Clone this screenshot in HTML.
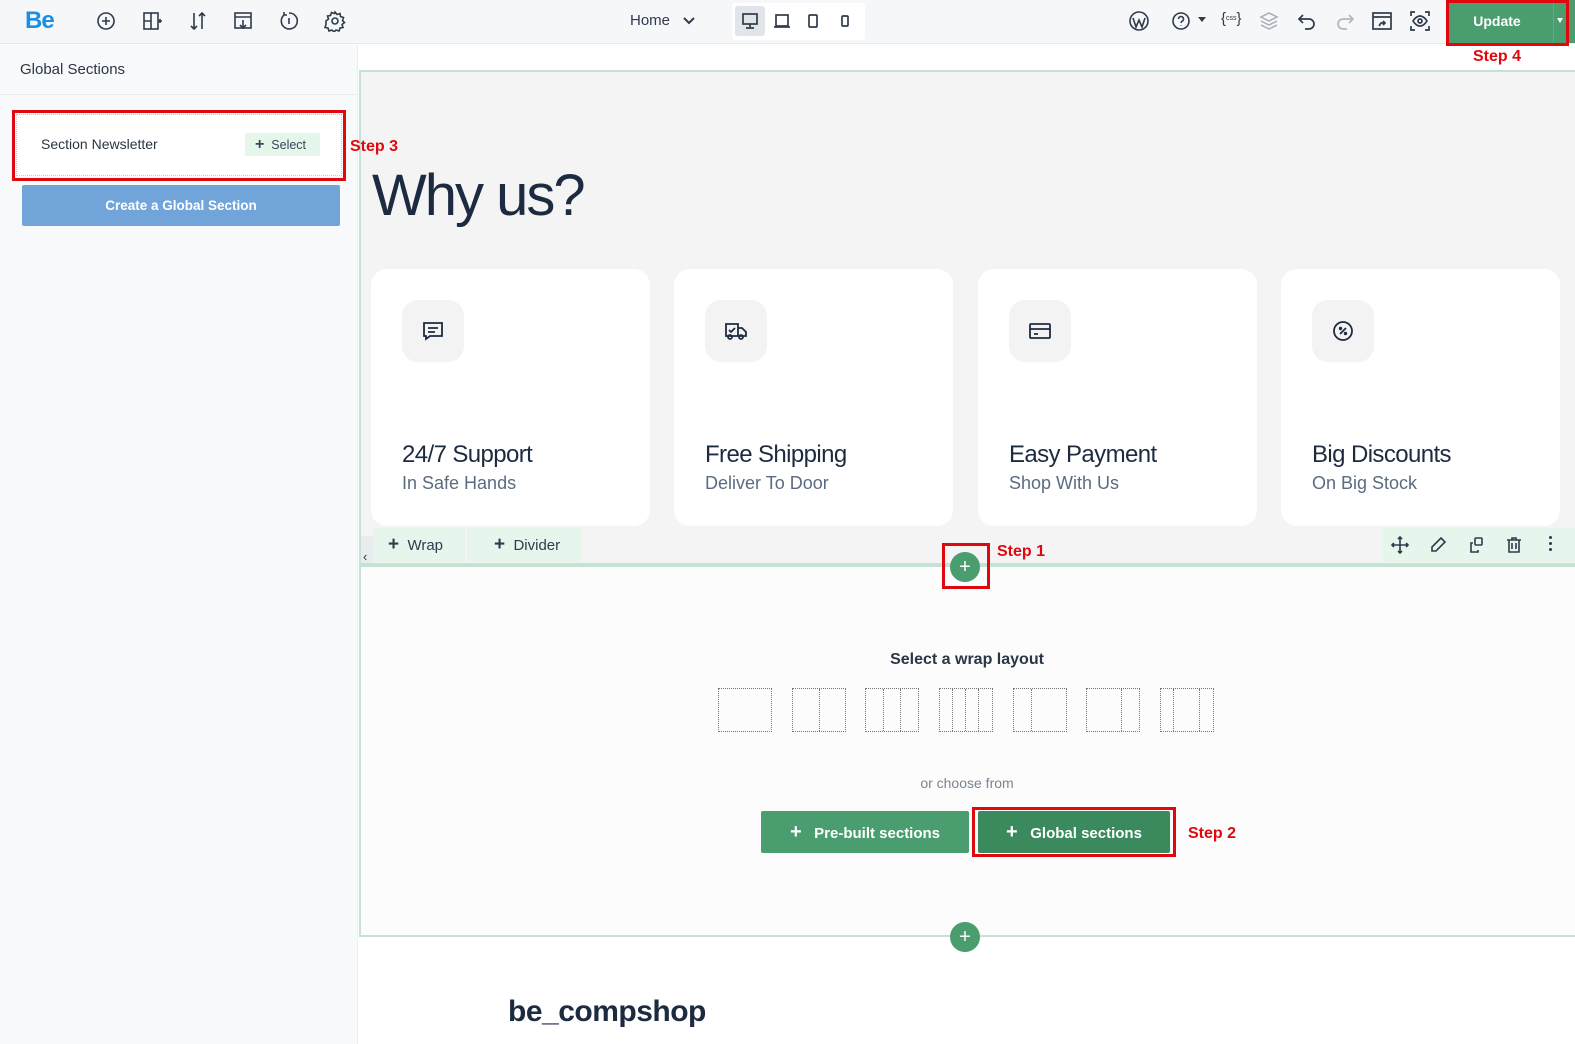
<!DOCTYPE html>
<html><head><meta charset="utf-8"><style>
*{box-sizing:border-box;margin:0;padding:0}
body{width:1575px;height:1044px;overflow:hidden;background:#fff;font-family:"Liberation Sans",sans-serif;position:relative;color:#1d2b40}
.a{position:absolute}
.ic{position:absolute;top:10px;width:22px;height:22px}
.red{position:absolute;border:3px solid #e0080f;z-index:5}
.stp{position:absolute;color:#e0080f;font-weight:bold;font-size:16px;z-index:5}
.card{position:absolute;top:269px;width:279px;height:257px;background:#fff;border-radius:16px}
.card .ib{position:absolute;left:31px;top:31px;width:62px;height:62px;border-radius:16px;background:#f3f3f3}
.card .ib svg{position:absolute;left:19px;top:19px}
.card h3{position:absolute;left:31px;top:172px;font-size:24px;font-weight:normal;color:#1d2b40;letter-spacing:-0.6px}
.card p{position:absolute;left:31px;top:204px;font-size:18px;color:#5b6b80}
.lay{position:absolute;top:688px;width:54px;height:44px;border:1.5px dotted #777}
.lay i{position:absolute;top:0;bottom:0;border-left:1.5px dotted #777}
.btn{position:absolute;top:811px;height:42px;color:#fff;font-size:15px;font-weight:bold;line-height:42px;text-align:center;border-radius:2px}
</style></head><body>
<!-- top bar -->
<div class="a" style="left:0;top:0;width:1575px;height:44px;background:#f6f7f9;border-bottom:1px solid #e6e9ee"></div>
<div class="a" style="left:25px;top:7px;font-size:24px;font-weight:bold;color:#1a8fe8;letter-spacing:-1px">Be</div>
<svg class="ic" style="left:95px" viewBox="0 0 22 22" fill="none" stroke="#2f3b4c" stroke-width="1.6"><circle cx="11" cy="11" r="8"/><path d="M11 7v8M7 11h8"/></svg>
<svg class="ic" style="left:141px" viewBox="0 0 22 22" fill="none" stroke="#2f3b4c" stroke-width="1.6"><rect x="3" y="3" width="14" height="16"/><path d="M10 3v16M3 11h7M17 11h4M19 9v4"/></svg>
<svg class="ic" style="left:187px" viewBox="0 0 22 22" fill="none" stroke="#2f3b4c" stroke-width="1.6"><path d="M7 3v16M4 16l3 3 3-3M15 19V3M12 6l3-3 3 3"/></svg>
<svg class="ic" style="left:232px" viewBox="0 0 22 22" fill="none" stroke="#2f3b4c" stroke-width="1.6"><rect x="3" y="3" width="16" height="15"/><path d="M3 7h16M11 10v8M8 15l3 3 3-3"/></svg>
<svg class="ic" style="left:278px" viewBox="0 0 22 22" fill="none" stroke="#2f3b4c" stroke-width="1.6"><path d="M6 5a8 8 0 1 0 5-2M6 2v3h3M11 8v6"/></svg>
<svg class="ic" style="left:324px" viewBox="0 0 22 22" fill="none" stroke="#2f3b4c" stroke-width="1.6"><circle cx="11" cy="11" r="3"/><path d="M11 2l2 2.5 3-1 .5 3 3 1-1 3 2 2-2.5 2 1 3-3 .5-1 3-3-1-2 2-2-2-3 1-1-3-3-.5 1-3L2 11l2.5-2-1-3 3-.5 1-3 3 1z"/></svg>
<div class="a" style="left:630px;top:12px;font-size:15px;color:#2f3b4c">Home</div>
<svg class="a" style="left:682px;top:14px" width="14" height="14" viewBox="0 0 14 14" fill="none" stroke="#2f3b4c" stroke-width="2"><path d="M2 4l5 5 5-5"/></svg>
<div class="a" style="left:732px;top:3px;width:133px;height:37px;background:#fff;border-radius:3px"></div>
<div class="a" style="left:735px;top:6px;width:30px;height:30px;background:#e1e4e8;border-radius:3px"></div>
<svg class="a" style="left:741px;top:12px" width="18" height="18" viewBox="0 0 18 18" fill="none" stroke="#2f3b4c" stroke-width="1.7"><rect x="2" y="2" width="14" height="10"/><path d="M9 12v3M5 16h8"/></svg>
<svg class="a" style="left:773px;top:12px" width="18" height="18" viewBox="0 0 18 18" fill="none" stroke="#2f3b4c" stroke-width="1.7"><rect x="3" y="3" width="12" height="11"/><path d="M1 15h16"/></svg>
<svg class="a" style="left:806px;top:12px" width="14" height="18" viewBox="0 0 14 18" fill="none" stroke="#2f3b4c" stroke-width="1.7"><rect x="3" y="3" width="8" height="12" rx="1"/></svg>
<svg class="a" style="left:839px;top:12px" width="12" height="18" viewBox="0 0 12 18" fill="none" stroke="#2f3b4c" stroke-width="1.7"><rect x="3" y="4" width="6" height="10" rx="1"/></svg>
<svg class="ic" style="left:1128px" viewBox="0 0 22 22" fill="none" stroke="#2f3b4c" stroke-width="1.6"><circle cx="11" cy="11" r="9"/><path d="M5 8l3 9 3-7 3 7 3-9"/></svg>
<svg class="ic" style="left:1170px" viewBox="0 0 22 22" fill="none" stroke="#2f3b4c" stroke-width="1.6"><circle cx="11" cy="11" r="8"/><path d="M8.5 9a2.5 2.5 0 1 1 3.5 2.3c-.7.4-1 .9-1 1.7M11 15.5v.5"/></svg>
<div class="a" style="left:1198px;top:17px;border:4px solid transparent;border-top:5px solid #2f3b4c"></div>
<div class="a" style="left:1221px;top:10px;font-size:15px;color:#2f3b4c">{<span style="font-size:7px;vertical-align:3px">css</span>}</div>
<svg class="ic" style="left:1258px" viewBox="0 0 22 22" fill="none" stroke="#a8aeb6" stroke-width="1.5"><path d="M11 3l8 4-8 4-8-4zM3 11l8 4 8-4M3 15l8 4 8-4"/></svg>
<svg class="ic" style="left:1296px" viewBox="0 0 22 22" fill="none" stroke="#2f3b4c" stroke-width="1.7"><path d="M7 5L3 9l4 4M3 9h10a5 5 0 0 1 0 10H9"/></svg>
<svg class="ic" style="left:1334px" viewBox="0 0 22 22" fill="none" stroke="#b3b8bf" stroke-width="1.7"><path d="M15 5l4 4-4 4M19 9H9a5 5 0 0 0 0 10h4"/></svg>
<svg class="ic" style="left:1371px" viewBox="0 0 22 22" fill="none" stroke="#2f3b4c" stroke-width="1.7"><rect x="2" y="3" width="18" height="16"/><path d="M2 7h18M8 16l2-3h4M12 11l2 2-2 2"/></svg>
<svg class="ic" style="left:1409px" viewBox="0 0 22 22" fill="none" stroke="#2f3b4c" stroke-width="1.7"><path d="M2 6V2h4M16 2h4v4M20 16v4h-4M6 20H2v-4"/><path d="M4 11s3-5 7-5 7 5 7 5-3 5-7 5-7-5-7-5z"/><circle cx="11" cy="11" r="2"/></svg>
<div class="a" style="left:1448px;top:0;width:127px;height:43px;background:#4a9d6e"></div>
<div class="a" style="left:1448px;top:13px;width:98px;text-align:center;color:#fff;font-size:14px;font-weight:bold">Update</div>
<div class="a" style="left:1553px;top:0;width:1px;height:43px;background:#5fae80"></div>
<div class="a" style="left:1557px;top:18px;border:3.5px solid transparent;border-top:5px solid #fff"></div>
<div class="red" style="left:1446px;top:0;width:123px;height:46px"></div>
<div class="stp" style="left:1473px;top:48px">Step 4</div>
<!-- sidebar -->
<div class="a" style="left:0;top:45px;width:358px;height:999px;background:#f8f9fa;border-right:1px solid #edf0f2"></div>
<div class="a" style="left:0;top:94px;width:358px;height:1px;background:#e7eaee"></div>
<div class="a" style="left:20px;top:61px;font-size:15px;color:#2a3646">Global Sections</div>
<div class="a" style="left:16px;top:114px;width:326px;height:62px;background:#fff;border:1px dotted #c5c9ce"></div>
<div class="red" style="left:12px;top:110px;width:334px;height:71px"></div>
<div class="a" style="left:41px;top:136px;font-size:14px;color:#2a3646">Section Newsletter</div>
<div class="a" style="left:245px;top:133px;width:75px;height:23px;background:#e5f6ea;border-radius:2px;font-size:12.5px;color:#394656;line-height:23px;padding-left:10px"><b style="font-size:16px">+</b>&nbsp; Select</div>
<div class="a" style="left:22px;top:185px;width:318px;height:41px;background:#71a5d9;border-radius:2px;color:#fff;font-size:13.5px;font-weight:bold;text-align:center;line-height:41px">Create a Global Section</div>
<!-- canvas -->
<div class="a" style="left:359px;top:70px;width:1216px;height:496px;background:#f4f4f4;border-top:2px solid #c5e3d2;border-left:2px solid #c5e3d2"></div>
<div class="stp" style="left:350px;top:138px">Step 3</div>
<div class="a" style="left:372px;top:162px;font-size:58px;color:#1d2b40;letter-spacing:-2px">Why us?</div>
<div class="card" style="left:371px"><div class="ib"><svg width="24" height="24" viewBox="0 0 24 24" fill="none" stroke="#1d2b40" stroke-width="1.8"><path d="M3 4h18v13H9l-4 3v-3H3z"/><path d="M7 9h10M7 13h7"/></svg></div><h3>24/7 Support</h3><p>In Safe Hands</p></div>
<div class="card" style="left:674px"><div class="ib"><svg width="24" height="24" viewBox="0 0 24 24" fill="none" stroke="#1d2b40" stroke-width="1.8"><path d="M2 5h12v12H2zM14 9h4l4 4v4h-8"/><circle cx="6" cy="18" r="2"/><circle cx="17" cy="18" r="2"/><path d="M5 11l2 2 4-4"/></svg></div><h3>Free Shipping</h3><p>Deliver To Door</p></div>
<div class="card" style="left:978px"><div class="ib"><svg width="24" height="24" viewBox="0 0 24 24" fill="none" stroke="#1d2b40" stroke-width="1.8"><rect x="2" y="5" width="20" height="14" rx="1"/><path d="M2 10h20M6 15h4"/></svg></div><h3>Easy Payment</h3><p>Shop With Us</p></div>
<div class="card" style="left:1281px"><div class="ib"><svg width="24" height="24" viewBox="0 0 24 24" fill="none" stroke="#1d2b40" stroke-width="1.8"><circle cx="12" cy="12" r="9"/><path d="M9 15l6-6"/><circle cx="9.5" cy="9.5" r=".8"/><circle cx="14.5" cy="14.5" r=".8"/></svg></div><h3>Big Discounts</h3><p>On Big Stock</p></div>
<!-- section toolbar -->
<div class="a" style="left:361px;top:536px;width:12px;height:46px;background:#e9ecef"></div>
<div class="a" style="left:363px;top:549px;font-size:13px;color:#333">‹</div>
<div class="a" style="left:373px;top:528px;width:92px;height:34px;background:#e6f6ec;font-size:15px;color:#2f3b4c;line-height:34px;padding-left:15px"><b style="font-size:19px">+</b>&nbsp; Wrap</div>
<div class="a" style="left:467px;top:528px;width:114px;height:34px;background:#e6f6ec;font-size:15px;color:#2f3b4c;line-height:34px;padding-left:27px"><b style="font-size:19px">+</b>&nbsp; Divider</div>
<div class="a" style="left:1382px;top:528px;width:193px;height:34px;background:#e6f6ec"></div>
<svg class="a" style="left:1390px;top:535px" width="20" height="20" viewBox="0 0 20 20" fill="none" stroke="#2f3b4c" stroke-width="1.6"><path d="M10 2v16M2 10h16M8 4l2-2 2 2M8 16l2 2 2-2M4 8l-2 2 2 2M16 8l2 2-2 2"/></svg>
<svg class="a" style="left:1428px;top:535px" width="20" height="20" viewBox="0 0 20 20" fill="none" stroke="#2f3b4c" stroke-width="1.6"><path d="M13 3l4 4-9 9H4v-4z"/></svg>
<svg class="a" style="left:1466px;top:535px" width="20" height="20" viewBox="0 0 20 20" fill="none" stroke="#2f3b4c" stroke-width="1.6"><rect x="9" y="3" width="7" height="7" rx="1"/><path d="M7 8H5v9h7v-2"/></svg>
<svg class="a" style="left:1504px;top:535px" width="20" height="20" viewBox="0 0 20 20" fill="none" stroke="#2f3b4c" stroke-width="1.6"><path d="M3 5h14M8 5V3h4v2M5 5v12h10V5M8 8v6M12 8v6"/></svg>
<div class="a" style="left:1549px;top:536px;width:3px;height:3px;background:#2f3b4c;box-shadow:0 6px #2f3b4c,0 12px #2f3b4c;border-radius:50%"></div>
<div class="a" style="left:359px;top:563px;width:1216px;height:4px;background:#c5e3d2"></div>
<!-- section 2 -->
<div class="a" style="left:359px;top:567px;width:1216px;height:370px;background:#fcfcfc;border-left:2px solid #c5e3d2;border-bottom:2px solid #c5e3d2"></div>
<div class="a" style="left:950px;top:552px;width:30px;height:30px;border-radius:50%;background:#4a9d6e;color:#fff;text-align:center;line-height:30px;font-size:20px">+</div>
<div class="red" style="left:942px;top:543px;width:48px;height:46px"></div>
<div class="stp" style="left:997px;top:543px">Step 1</div>
<div class="a" style="left:0;top:651px;width:1575px;padding-left:359px;text-align:center;font-size:16px;color:#2a3646;font-weight:bold">Select a wrap layout</div>
<div class="lay" style="left:718px"></div>
<div class="lay" style="left:792px"><i style="left:26px"></i></div>
<div class="lay" style="left:865px"><i style="left:17px"></i><i style="left:34px"></i></div>
<div class="lay" style="left:939px"><i style="left:12px"></i><i style="left:25px"></i><i style="left:38px"></i></div>
<div class="lay" style="left:1013px"><i style="left:17px"></i></div>
<div class="lay" style="left:1086px"><i style="left:34px"></i></div>
<div class="lay" style="left:1160px"><i style="left:12px"></i><i style="left:38px"></i></div>
<div class="a" style="left:0;top:775px;width:1575px;padding-left:359px;text-align:center;font-size:14px;color:#7a8593">or choose from</div>
<div class="btn" style="left:761px;width:208px;background:#4a9d6e"><span style="font-size:20px">+</span>&nbsp;&nbsp; Pre-built sections</div>
<div class="btn" style="left:978px;width:192px;background:#3a8a5e"><span style="font-size:20px">+</span>&nbsp;&nbsp; Global sections</div>
<div class="red" style="left:972px;top:807px;width:204px;height:50px"></div>
<div class="stp" style="left:1188px;top:825px">Step 2</div>
<div class="a" style="left:950px;top:922px;width:30px;height:30px;border-radius:50%;background:#4a9d6e;color:#fff;text-align:center;line-height:30px;font-size:20px">+</div>
<div class="a" style="left:508px;top:995px;font-size:30px;font-weight:bold;color:#1d2b40;letter-spacing:-0.5px">be_compshop</div>
</body></html>
